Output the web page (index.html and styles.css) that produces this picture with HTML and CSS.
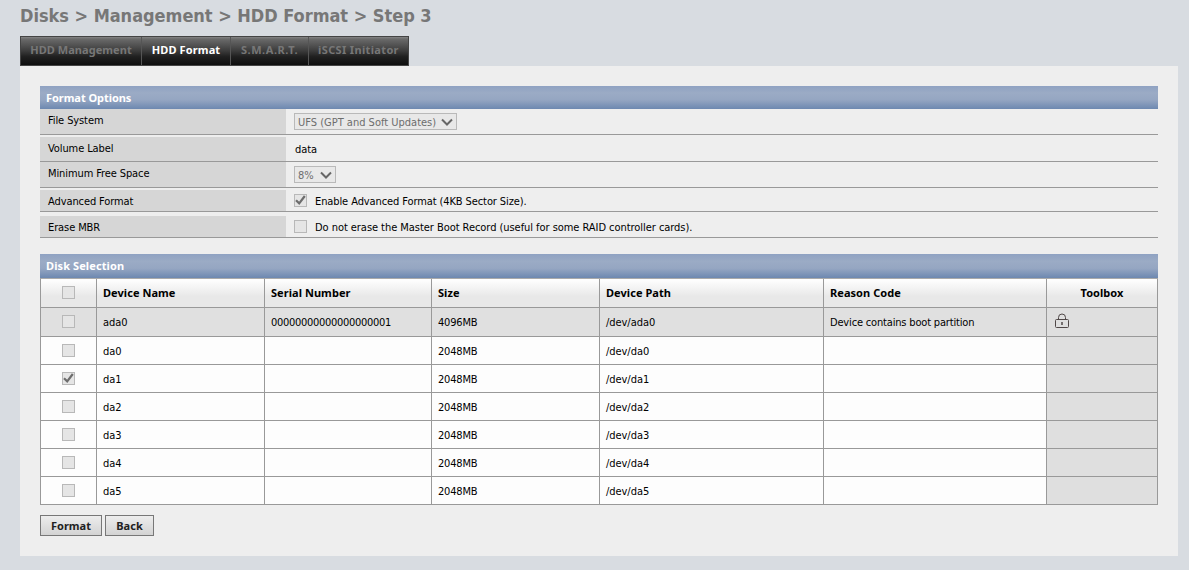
FILE: index.html
```html
<!DOCTYPE html>
<html lang="en">
<head>
<meta charset="utf-8">
<title>Disks - HDD Format</title>
<link rel="stylesheet" href="styles.css">
</head>
<body>
<h1 class="title"><span>Disks &gt; Management &gt; HDD Format &gt; Step 3</span></h1>
<nav class="tabs">
  <a class="tab tab-mgmt">HDD Management</a>
  <a class="tab tab-format active">HDD Format</a>
  <a class="tab tab-smart">S.M.A.R.T.</a>
  <a class="tab tab-iscsi">iSCSI Initiator</a>
</nav>
<main class="panel">
  <h2 class="bar">Format Options</h2>
  <div class="options">
    <div class="option row-fs"><div class="label">File System</div><div class="value"><span class="select select-fs">UFS (GPT and Soft Updates)<svg class="chevron" viewBox="0 0 12 8"><path d="M1 1.5l5 5 5-5"/></svg></span></div></div>
    <div class="option row-volume"><div class="label">Volume Label</div><div class="value"><span class="plain">data</span></div></div>
    <div class="option row-space"><div class="label">Minimum Free Space</div><div class="value"><span class="select select-pct">8%<svg class="chevron" viewBox="0 0 12 8"><path d="M1 1.5l5 5 5-5"/></svg></span></div></div>
    <div class="option row-adv"><div class="label">Advanced Format</div><div class="value"><span class="check"><svg viewBox="0 0 11 11"><path d="M1 5.2l3.2 3.2 5.6-7.4"/></svg></span><span class="note note-adv">Enable Advanced Format (4KB Sector Size).</span></div></div>
    <div class="option row-mbr"><div class="label">Erase MBR</div><div class="value"><span class="check"></span><span class="note">Do not erase the Master Boot Record (useful for some RAID controller cards).</span></div></div>
  </div>
  <h2 class="bar bar-disks">Disk Selection</h2>
  <div class="disks">
    <div class="disk head"><div class="pick"><span class="check"></span></div><div>Device Name</div><div>Serial Number</div><div>Size</div><div>Device Path</div><div>Reason Code</div><div class="tool">Toolbox</div></div>
    <div class="disk locked"><div class="pick"><span class="check"></span></div><div>ada0</div><div class="serial">00000000000000000001</div><div class="size">4096MB</div><div>/dev/ada0</div><div class="reason">Device contains boot partition</div><div class="tool"><svg class="lock" viewBox="0 0 16 16"><path d="M4.5 6.5V4.5a3.5 3.5 0 0 1 7 0v2"/><rect x="1.5" y="6.5" width="13" height="8" rx="1"/><path class="keyhole" d="M8 9v3"/></svg></div></div>
    <div class="disk"><div class="pick"><span class="check"></span></div><div>da0</div><div></div><div class="size">2048MB</div><div>/dev/da0</div><div></div><div class="tool"></div></div>
    <div class="disk"><div class="pick"><span class="check"><svg viewBox="0 0 11 11"><path d="M1 5.2l3.2 3.2 5.6-7.4"/></svg></span></div><div>da1</div><div></div><div class="size">2048MB</div><div>/dev/da1</div><div></div><div class="tool"></div></div>
    <div class="disk"><div class="pick"><span class="check"></span></div><div>da2</div><div></div><div class="size">2048MB</div><div>/dev/da2</div><div></div><div class="tool"></div></div>
    <div class="disk"><div class="pick"><span class="check"></span></div><div>da3</div><div></div><div class="size">2048MB</div><div>/dev/da3</div><div></div><div class="tool"></div></div>
    <div class="disk"><div class="pick"><span class="check"></span></div><div>da4</div><div></div><div class="size">2048MB</div><div>/dev/da4</div><div></div><div class="tool"></div></div>
    <div class="disk"><div class="pick"><span class="check"></span></div><div>da5</div><div></div><div class="size">2048MB</div><div>/dev/da5</div><div></div><div class="tool"></div></div>
  </div>
  <div class="actions"><button class="btn btn-format">Format</button><button class="btn btn-back">Back</button></div>
</main>
</body>
</html>
```
FILE: styles.css
```css
* { box-sizing: border-box; }
body { margin: 0; padding: 0 11px 14px 20px; height: 570px; overflow: hidden; background: #d8dce1; color: #000; font: 11px/14px Tahoma, "DejaVu Sans Condensed", "Noto Sans", sans-serif; letter-spacing: -0.05px; white-space: nowrap; }
h1, h2 { margin: 0; }
.title { height: 36px; padding-top: 5px; color: #777; font: bold 18px/22px Tahoma, "DejaVu Sans Condensed", sans-serif; letter-spacing: -0.03px; }
.tabs { display: flex; width: 389px; height: 30px; border: 1px solid #444; background: linear-gradient(#858585 0, #6a6a6a 2px, #3b3b3b 50%, #202020 70%, #0e0e0e); }
.tab { display: flex; align-items: center; justify-content: center; padding-bottom: 2px; border-right: 1px solid #555; color: #777; font-weight: bold; font-family: Tahoma, "Noto Sans", sans-serif; letter-spacing: 0.05px; }
.tab-mgmt { width: 121px; }
.tab-format { width: 89px; letter-spacing: 0.12px; }
.tab-smart { width: 78px; letter-spacing: 0.55px; }
.tab-iscsi { width: 99px; border-right: 0; letter-spacing: 0.35px; }
.tabs .active { color: #fff; }
.panel { width: 1158px; height: 490px; padding: 20px; background: #eee; }
.bar { height: 23px; padding: 5px 6px 0; background: linear-gradient(#8fa2c2 0, #9babc5 30%, #95a6c2 60%, #6d88b0); color: #fff; font: bold 11px/14px Tahoma, "Noto Sans", sans-serif; }
.bar-disks { height: 24px; margin-top: 16px; letter-spacing: 0.1px; }
.option { display: flex; border-bottom: 1px solid #999; }
.label { width: 246px; padding: 0 8px; background: #d6d6d6; display: flex; align-items: center; letter-spacing: -0.1px; }
.value { display: flex; align-items: center; padding-left: 8px; }
.row-fs { height: 26px; }
.row-fs .label { padding-bottom: 2px; }
.row-volume { height: 27px; padding-top: 2px; }
.row-space { height: 26px; }
.row-space .label { padding-bottom: 2px; }
.row-adv { height: 24px; padding-top: 2px; }
.row-adv .label, .row-mbr .label { padding-top: 2px; }
.row-mbr { height: 26px; padding-top: 4px; }
.plain { padding: 1px 0 0 1px; }
.select { display: flex; align-items: center; justify-content: space-between; height: 17px; padding: 2px 3px 0; border: 1px solid #b9b9b9; background: #e8e8e8; color: #6d6d6d; letter-spacing: 0; }
.select-fs { width: 163px; }
.select-pct { width: 42px; }
.chevron { width: 12px; height: 8px; margin-bottom: 2px; fill: none; stroke: #666; stroke-width: 2; }
.check { width: 13px; height: 13px; flex: none; border: 1px solid #b8b8b8; background: #e5e5e5; }
.check svg { display: block; width: 11px; height: 11px; fill: none; stroke: #6d6d6d; stroke-width: 2.2; }
.note { padding: 2px 0 0 8px; }
.note-adv { letter-spacing: -0.1px; }
.disks { border-top: 1px solid #aaa; border-left: 1px solid #999; }
.disk { display: grid; grid-template-columns: 56px 168px 167px 168px 224px 223px 111px; height: 28px; background: #fdfdfd; }
.disk > div { display: flex; align-items: center; padding: 2px 0 0 6px; border-right: 1px solid #999; border-bottom: 1px solid #999; }
.disk > .pick { justify-content: center; padding: 0; }
.disk > .tool { background: #dfdfdf; }
.disk > .size { letter-spacing: -0.2px; }
.disk > .serial { letter-spacing: -0.3px; }
.disk > .reason { letter-spacing: -0.17px; }
.disk.head { height: 29px; background: linear-gradient(#fff, #e8e8e8 60%, #e8e8e8); font-weight: bold; font-family: Tahoma, "Noto Sans", sans-serif; letter-spacing: 0.05px; }
.disk.head > div { padding-top: 0; }
.disk.head > .tool { justify-content: center; padding: 0; background: none; }
.disk.head > .pick, .disk.locked > .pick { padding-bottom: 1px; }
.disk.locked { height: 29px; background: #e0e0e0; }
.disk.locked > .tool { padding: 0 0 2px 7px; }
.lock { width: 16px; height: 16px; fill: none; stroke: #504848; }
.keyhole { stroke-width: 1.5; }
.actions { display: flex; gap: 3px; padding-top: 10px; }
.btn { height: 21px; padding: 0; border: 1px solid #777; background: linear-gradient(#ededed, #d3d3d3); color: #222; font: bold 11px/14px Tahoma, "Noto Sans", sans-serif; }
.btn-format { width: 62px; }
.btn-back { width: 49px; }
```
